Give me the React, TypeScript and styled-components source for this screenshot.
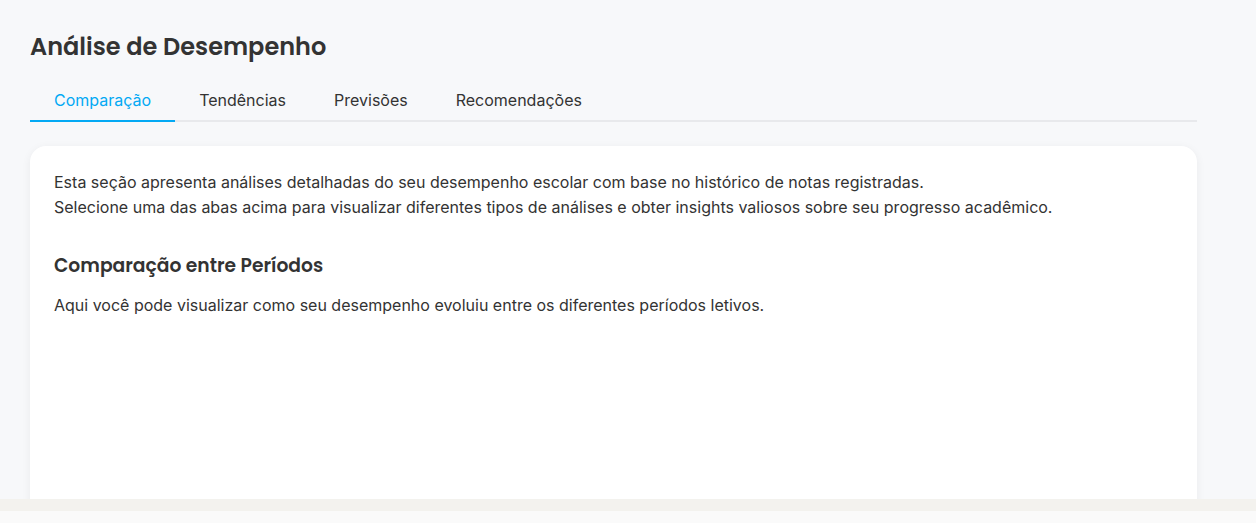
import React, { useState } from "react";
import styled, { createGlobalStyle } from "styled-components";

const Global = createGlobalStyle`
  html, body { margin: 0; padding: 0; background: #f7f8fa; }
  body { font-family: Inter, "Noto Sans", sans-serif; color: #333; overflow: hidden; }
  * { box-sizing: border-box; }
`;

const Page = styled.div`
  min-height: 523px;
  padding: 29px 59px 0 30px;
`;

const Title = styled.h1`
  margin: 0;
  font-family: Poppins, "Open Sans", sans-serif;
  font-size: 24px;
  font-weight: 600;
  line-height: 36px;
  color: #333;
`;

const TabList = styled.div`
  display: flex;
  margin-top: 15px;
  border-bottom: 2px solid #e8e9ec;
`;

const Tab = styled.button<{ $active?: boolean }>`
  border: none;
  background: none;
  padding: 10px 24px;
  margin-bottom: -2px;
  font-family: Inter, sans-serif;
  font-size: 16px;
  line-height: 20px;
  cursor: pointer;
  color: ${(p) => (p.$active ? "#03a9f4" : "#333")};
  border-bottom: 2px solid ${(p) => (p.$active ? "#03a9f4" : "transparent")};
`;

const Card = styled.div`
  margin-top: 24px;
  background: #fff;
  border-radius: 16px;
  box-shadow: 0 2px 10px rgba(0, 0, 0, 0.06);
  padding: 24px 24px 200px;
  min-height: 400px;
`;

const Text = styled.p`
  margin: 0;
  font-size: 16px;
  line-height: 25px;
  color: #333;
`;

const SectionTitle = styled.h3`
  margin: 32.5px 0 0;
  font-family: Poppins, "Open Sans", sans-serif;
  font-size: 18.72px;
  font-weight: 600;
  line-height: 26px;
  color: #333;
`;

const SectionText = styled(Text)`
  margin-top: 14.5px;
`;

const BottomBar = styled.div`
  position: fixed;
  left: 0;
  right: 0;
  bottom: 0;
  height: 24px;
  background: #fafafa;
  border-top: 12px solid #f3f2ee;
`;

const tabs = ["Comparação", "Tendências", "Previsões", "Recomendações"];

export default function App() {
  const [active, setActive] = useState(0);
  return (
    <>
      <Global />
      <Page>
        <Title>Análise de Desempenho</Title>
        <TabList>
          {tabs.map((t, i) => (
            <Tab key={t} $active={i === active} onClick={() => setActive(i)}>
              {t}
            </Tab>
          ))}
        </TabList>
        <Card>
          <Text>
            Esta seção apresenta análises detalhadas do seu desempenho escolar com base no histórico de notas registradas.
            <br />
            Selecione uma das abas acima para visualizar diferentes tipos de análises e obter insights valiosos sobre seu progresso acadêmico.
          </Text>
          <SectionTitle>Comparação entre Períodos</SectionTitle>
          <SectionText>
            Aqui você pode visualizar como seu desempenho evoluiu entre os diferentes períodos letivos.
          </SectionText>
        </Card>
      </Page>
      <BottomBar />
    </>
  );
}
